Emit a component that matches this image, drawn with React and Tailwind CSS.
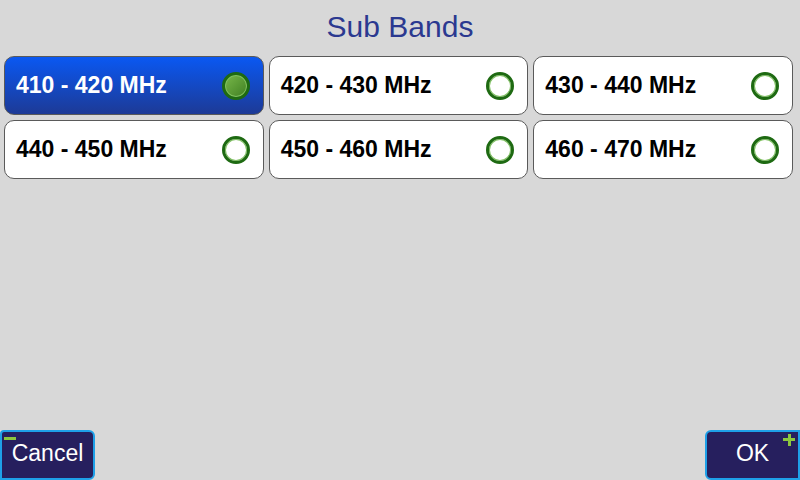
import { useState } from 'react';

const bands = [
  '410 - 420 MHz',
  '420 - 430 MHz',
  '430 - 440 MHz',
  '440 - 450 MHz',
  '450 - 460 MHz',
  '460 - 470 MHz',
];

function Radio({ on }) {
  return (
    <div
      className={
        'w-[28px] h-[28px] rounded-full border-[3px] border-[#1e6a12] shadow-[inset_0_0_0_1px_#7fc060] ' +
        (on ? 'bg-[linear-gradient(135deg,#79b84a,#3f7f22)]' : 'bg-white')
      }
    />
  );
}

export default function App() {
  const [sel, setSel] = useState(0);

  return (
    <div className="w-[800px] h-[480px] bg-[#d8d8d8] flex flex-col font-['Liberation_Sans',Arial,sans-serif] overflow-hidden">
      <h1 className="h-[54px] pt-[7px] text-center text-[30px] leading-[40px] text-[#2b3990]">Sub Bands</h1>

      <div className="grid grid-cols-3 gap-x-[5px] gap-y-[5px] pl-[4px] pr-[7px] mt-[2px]">
        {bands.map((b, i) => (
          <button
            key={b}
            onClick={() => setSel(i)}
            className={
              'h-[59px] rounded-[10px] border border-[#5a5a5a] flex items-center justify-between pl-[11px] pr-[13px] ' +
              (sel === i
                ? 'bg-[linear-gradient(180deg,#0a58f2,#1d3a96)] text-white'
                : 'bg-white text-black')
            }
          >
            <span className="text-[23px] font-bold">{b}</span>
            <Radio on={sel === i} />
          </button>
        ))}
      </div>

      <div className="mt-auto flex justify-between items-end">
        <button className="relative w-[95px] h-[50px] bg-[#261f5e] border-2 border-[#1ea0e8] rounded-tr-[6px] rounded-br-[6px] rounded-tl-[4px] text-white text-[23px] pb-[4px]">
          <span className="absolute left-[2px] top-[5px] w-[12px] h-[3px] bg-[#8cc63f]" />
          Cancel
        </button>
        <button className="relative w-[95px] h-[50px] bg-[#261f5e] border-2 border-[#1ea0e8] rounded-tl-[6px] rounded-bl-[6px] text-white text-[23px] pb-[4px]">
          <span className="absolute right-[3px] top-[6px] w-[12px] h-[3px] bg-[#8cc63f]" />
          <span className="absolute right-[7.5px] top-[1.5px] w-[3px] h-[12px] bg-[#8cc63f]" />
          OK
        </button>
      </div>
    </div>
  );
}
